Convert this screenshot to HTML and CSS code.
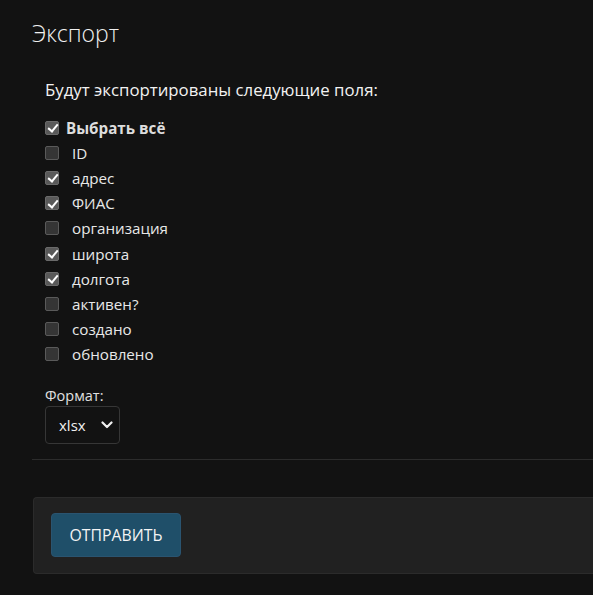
FILE: index.html
```html
<!DOCTYPE html>
<html lang="ru">
<head>
<meta charset="utf-8">
<title>Экспорт</title>
<link rel="stylesheet" href="styles.css">
</head>
<body>
<div class="content">
  <h1 class="title">Экспорт</h1>
  <form class="export-form">
    <fieldset class="module">
      <p class="intro">Будут экспортированы следующие поля:</p>
      <ul class="fields">
        <li class="field all"><span class="cb checked"></span><label>Выбрать всё</label></li>
        <li class="field"><span class="cb"></span><label>ID</label></li>
        <li class="field"><span class="cb checked"></span><label>адрес</label></li>
        <li class="field"><span class="cb checked"></span><label>ФИАС</label></li>
        <li class="field"><span class="cb"></span><label>организация</label></li>
        <li class="field"><span class="cb checked"></span><label>широта</label></li>
        <li class="field"><span class="cb checked"></span><label>долгота</label></li>
        <li class="field"><span class="cb"></span><label>активен?</label></li>
        <li class="field"><span class="cb"></span><label>создано</label></li>
        <li class="field"><span class="cb"></span><label>обновлено</label></li>
      </ul>
      <div class="format">
        <label class="format-label">Формат:</label>
        <div class="select">
          <span>xlsx</span>
          <svg class="chev" width="12" height="8" viewBox="0 0 12 8"><path d="M1.5 1.5 L6 6 L10.5 1.5" fill="none" stroke="#f0f0f0" stroke-width="2.2" stroke-linecap="round" stroke-linejoin="round"/></svg>
        </div>
      </div>
    </fieldset>
    <div class="submit-row">
      <button type="button" class="btn">ОТПРАВИТЬ</button>
    </div>
  </form>
</div>
</body>
</html>
```

FILE: styles.css
```css
html, body {
  margin: 0;
  padding: 0;
  background: #121212;
  color: #eeeeee;
  font-family: "Open Sans", "Noto Sans", sans-serif;
}
.content {
  padding: 15px 0 0 32px;
}
.title {
  margin: 0;
  font-weight: 300;
  font-size: 23px;
  line-height: 36px;
  color: #f0f0f0;
}
.export-form {
  margin: 0;
}
.module {
  margin: 0;
  padding: 27px 0 15px 13px;
  border: 0;
  border-bottom: 1px solid #2c2c2c;
}
.intro {
  margin: 0 0 13px;
  font-size: 16.8px;
  line-height: 24px;
  color: #f2f2f2;
}
.fields {
  list-style: none;
  margin: 0;
  padding: 0;
}
.field {
  display: flex;
  align-items: center;
  height: 25.2px;
  font-size: 15.2px;
  color: #e8e8e8;
}
.field label {
  margin-left: 13px;
}
.field.all label {
  margin-left: 7px;
  font-weight: 700;
  color: #dddddd;
}
.cb {
  flex: none;
  box-sizing: border-box;
  width: 14px;
  height: 14px;
  border: 1px solid #5a5a5a;
  border-radius: 2px;
  background: #353535;
  position: relative;
}
.cb.checked {
  background: #595959;
  border-color: #6a6a6a;
}
.cb.checked::after {
  content: "";
  position: absolute;
  left: 3.5px;
  top: 0.5px;
  width: 4px;
  height: 8px;
  border: solid #ffffff;
  border-width: 0 2px 2px 0;
  transform: rotate(40deg);
}
.format {
  margin-top: 20px;
}
.format-label {
  display: block;
  font-size: 14.5px;
  line-height: 18px;
  color: #e0e0e0;
}
.select {
  box-sizing: border-box;
  margin-top: 1px;
  width: 75px;
  height: 38px;
  border: 1px solid #363636;
  border-radius: 4px;
  background: #121212;
  display: flex;
  align-items: center;
  justify-content: space-between;
  padding: 0 6px 0 13px;
  font-size: 15px;
  color: #f0f0f0;
}
.chev {
  display: block;
}
.submit-row {
  margin-top: 37px;
  margin-left: 1px;
  height: 77px;
  box-sizing: border-box;
  background: #212121;
  border: 1px solid #2b2b2b;
  border-right: 0;
  border-radius: 4px 0 0 4px;
  padding: 15px 0 0 17px;
}
.btn {
  width: 130px;
  height: 44px;
  border: 1px solid #2a5470;
  border-radius: 4px;
  background: #1f4f69;
  color: #f4f4f4;
  font-family: inherit;
  font-size: 15.8px;
  padding: 0;
}
```
